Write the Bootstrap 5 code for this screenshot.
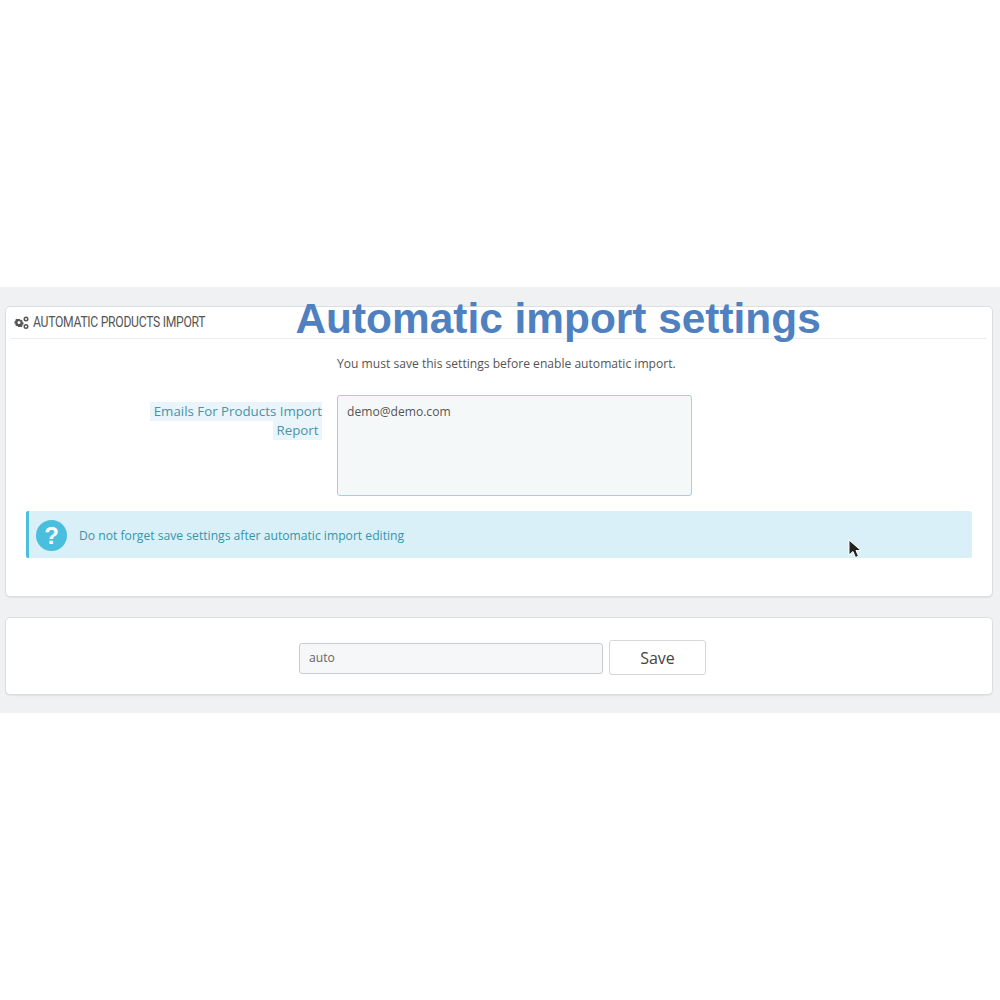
<!DOCTYPE html>
<html lang="en">
<head>
    <meta charset="UTF-8" />
    <meta name="viewport" content="width=device-width, initial-scale=1" />
    <title>Automatic import settings</title>
    <link href="https://cdn.jsdelivr.net/npm/bootstrap@5.3.0/dist/css/bootstrap.min.css" rel="stylesheet" />
    <style>
        body { background: #fff; padding-top: 287px; font-family: "Open Sans", sans-serif; color: #555; font-size: 13px; }
        .stage { position: relative; background: #eff1f2; height: 426px; padding: 19px 7px 0 5px; }
        .big-title { position: absolute; left: 295.500px; top: 5px; margin: 0; font: bold 42.4px/54px "Liberation Sans", sans-serif; color: #4f81c0; white-space: nowrap; }
        .panel-box { background: #fff; border: 1px solid #dcdfe0; border-radius: 5px; box-shadow: 0 1px 1px #e0e2e3; }
        .panel-main { height: 291px; padding: 0 5px; }
        .panel-save { height: 78px; margin-top: 20px; padding-top: 22px; padding-left: 7px; }
        .panel-head { height: 32px; border-bottom: 1px solid #eaedef; padding-left: 3px; color: #555; font-family: "Roboto", sans-serif; font-size: 14.5px; }
        .head-text { display: inline-block; transform: scaleX(.84); transform-origin: left center; white-space: nowrap; letter-spacing: -.35px; }
        .note-line { height: 56px; padding-left: 326px; padding-top: 16px; line-height: 18px; color: #555; font-size: 12.1px; white-space: nowrap; }
        .mail-label { width: 311px; text-align: right; padding-top: 7px; padding-left: 130px; font-size: 13.3px; line-height: 19px; color: #4a93a5; flex: none; }
        .mail-label span { background: #e9f5fa; box-decoration-break: clone; -webkit-box-decoration-break: clone; padding: 0 0 1px 4px; }
        .mail-area { width: 355px; height: 101px; margin-left: 15px; background: #f5f8f9; border: 1px solid #a4cfdc; border-radius: 3px; padding: 7px 9px; font-size: 12.1px; line-height: 18px; color: #555; resize: none; box-shadow: none; }
        .tip-bar { margin: 15px 15px 0 15px; height: 47px; background: #d9f0f8; border-left: 3px solid #4dbfdb; border-radius: 2px; padding: 1px 0 0 7px; color: #3a94a8; font-size: 12.15px; }
        .tip-ico { width: 31px; height: 31px; border-radius: 50%; background: #4abfdd; color: #fff; font: bold 24px/31px "Liberation Sans", sans-serif; text-align: center; margin-right: 12px; flex: none; }
        .tip-text { padding-top: 3px; }
        .cursor-ico { position: absolute; left: 848px; top: 252px; }
        .auto-input { width: 304px; height: 31px; margin-top: 3px; background: #f5f7f8; border: 1px solid #c8cccf; border-radius: 3px; padding: 0 9px 2px; font-size: 12.1px; color: #666; box-shadow: none; }
        .save-btn { width: 97px; height: 35px; margin-left: 6px; background: #fff; border: 1px solid #d5d8da; border-radius: 3px; font-size: 16px; line-height: 33px; padding: 1px 0 0; color: #444; }
    </style>
</head>
<body>
    <div class="stage">
        <h1 class="big-title">Automatic import settings</h1>

        <div class="panel-box panel-main">
            <div class="panel-head d-flex align-items-center gap-1">
                <svg width="15" height="14" viewBox="0 0 15 14" fill="#555">
                    <path fill-rule="evenodd" d="M4 3h2l.3 1.2 1-.5 1.4 1.4-.5 1 1.3.4v2l-1.3.3.5 1.1-1.4 1.4-1-.5L6 11H4l-.3-1.2-1.1.5-1.4-1.4.5-1.1L.5 7.5v-2l1.2-.4-.5-1 1.4-1.4 1.1.5zM5 5a1.500 1.500 0 1 0 0 3 1.500 1.500 0 0 0 0-3z"/>
                    <path fill-rule="evenodd" d="M12 .5a2.500 2.500 0 1 1 0 5 2.500 2.500 0 0 1 0-5zm0 1.500a1 1 0 1 0 0 2 1 1 0 0 0 0-2zM12 8a2.500 2.500 0 1 1 0 5 2.500 2.500 0 0 1 0-5zm0 1.500a1 1 0 1 0 0 2 1 1 0 0 0 0-2z"/>
                </svg>
                <span class="head-text">AUTOMATIC PRODUCTS IMPORT</span>
            </div>
            <div class="note-line">You must save this settings before enable automatic import.</div>
            <div class="d-flex">
                <label class="mail-label"><span>Emails For Products Import Report&nbsp;</span></label>
                <textarea class="form-control mail-area">demo@demo.com</textarea>
            </div>
            <div class="tip-bar d-flex align-items-center">
                <div class="tip-ico">?</div>
                <div class="tip-text">Do not forget save settings after automatic import editing</div>
            </div>
        </div>

        <div class="panel-box panel-save d-flex justify-content-center align-items-start">
            <input type="text" class="form-control auto-input" value="auto" />
            <button type="button" class="btn save-btn">Save</button>
        </div>

        <svg class="cursor-ico" width="15" height="22" viewBox="0 0 15 22">
            <path d="M1 1v15l4-3.500 2.500 6 3-1.300-2.500-5.700h5z" fill="#222" stroke="#fff" stroke-width="1"/>
        </svg>
    </div>

    <script src="https://cdn.jsdelivr.net/npm/bootstrap@5.3.0/dist/js/bootstrap.bundle.min.js"></script>
</body>
</html>
